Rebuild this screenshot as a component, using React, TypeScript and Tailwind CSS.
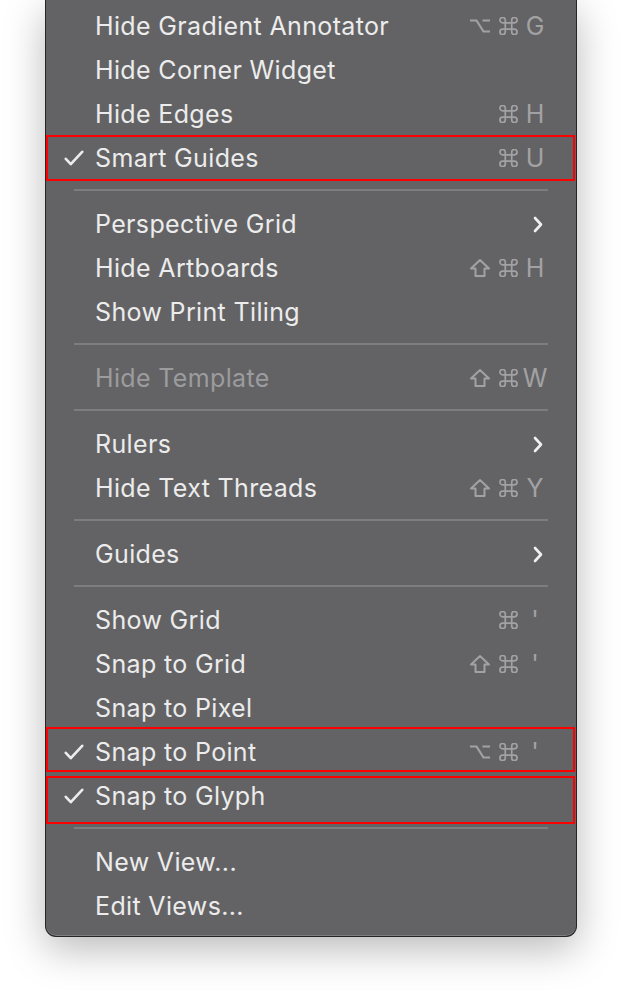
import React from "react";

type Mod = "cmd" | "opt" | "shift";

type Item = {
  label: string;
  checked?: boolean;
  disabled?: boolean;
  sub?: boolean;
  mods?: Mod[];
  keyChar?: string;
  box?: string;
};

type Entry = Item | "sep";

const items: Entry[] = [
  { label: "Hide Gradient Annotator", mods: ["opt", "cmd"], keyChar: "G" },
  { label: "Hide Corner Widget" },
  { label: "Hide Edges", mods: ["cmd"], keyChar: "H" },
  { label: "Smart Guides", checked: true, box: "-top-[1px] -bottom-[1px]", mods: ["cmd"], keyChar: "U" },
  "sep",
  { label: "Perspective Grid", sub: true },
  { label: "Hide Artboards", mods: ["shift", "cmd"], keyChar: "H" },
  { label: "Show Print Tiling" },
  "sep",
  { label: "Hide Template", disabled: true, mods: ["shift", "cmd"], keyChar: "W" },
  "sep",
  { label: "Rulers", sub: true },
  { label: "Hide Text Threads", mods: ["shift", "cmd"], keyChar: "Y" },
  "sep",
  { label: "Guides", sub: true },
  "sep",
  { label: "Show Grid", mods: ["cmd"], keyChar: "'" },
  { label: "Snap to Grid", mods: ["shift", "cmd"], keyChar: "'" },
  { label: "Snap to Pixel" },
  { label: "Snap to Point", checked: true, box: "-top-[3px] bottom-[2px]", mods: ["opt", "cmd"], keyChar: "'" },
  { label: "Snap to Glyph", checked: true, box: "top-[2px] -bottom-[6px]" },
  "sep",
  { label: "New View..." },
  { label: "Edit Views..." },
];

const ModIcon = ({ mod }: { mod: Mod }) => {
  if (mod === "cmd") {
    return (
      <svg width="19" height="18" viewBox="1.6 1.6 16.8 16.8" fill="none" stroke="currentColor" strokeWidth="1.6">
        <path d="M7 7H4.5A2.5 2.5 0 1 1 7 4.5V15.5A2.5 2.5 0 1 1 4.5 13H15.5A2.5 2.5 0 1 1 13 15.5V4.5A2.5 2.5 0 1 1 15.5 7Z" />
      </svg>
    );
  }
  if (mod === "opt") {
    return (
      <svg width="22" height="16" viewBox="0 0 22 16" fill="none" stroke="currentColor" strokeWidth="2.2">
        <path d="M1 2.5h6.5l7 11h6.5M13.5 2.5h7.5" />
      </svg>
    );
  }
  return (
    <svg width="22" height="20" viewBox="0 0 22 20" fill="none" stroke="currentColor" strokeWidth="2" strokeLinejoin="round">
      <path d="M11 2L20 10.5H15.5V18H6.5V10.5H2Z" />
    </svg>
  );
};

const Row = ({ item }: { item: Item }) => {
  const mods = item.mods ?? [];
  const slots: (Mod | null)[] = mods.length === 2 ? mods : [null, ...mods];
  return (
    <div className="relative flex h-[44px] items-center">
      {item.box && (
        <span className={`pointer-events-none absolute left-0 right-px border-2 border-[#ff0000] ${item.box}`} />
      )}
      <div className="flex w-[49px] shrink-0 justify-end pr-[11px] text-[#ececec]">
        {item.checked && (
          <svg width="20" height="16" viewBox="0 0 20 16" fill="none" stroke="currentColor" strokeWidth="2.6" strokeLinecap="round" strokeLinejoin="round">
            <path d="M1.8 8.8L6.8 14.2L18.2 1.8" />
          </svg>
        )}
      </div>
      <span className={`flex-1 tracking-[0.35px] ${item.disabled ? "text-[#9c9c9e]" : "text-[#ececec]"}`}>
        {item.label}
      </span>
      {item.sub && (
        <div className="flex w-[26px] justify-end pr-[5px] text-[#f0f0f0]">
          <svg width="10" height="17" viewBox="0 0 10 17" fill="none" stroke="currentColor" strokeWidth="2.6" strokeLinecap="round" strokeLinejoin="round">
            <path d="M2 2L8 8.5L2 15" />
          </svg>
        </div>
      )}
      {item.keyChar && (
        <div className="flex items-center text-[#a2a2a4]">
          {slots.map((m, i) => (
            <div key={i} className="flex w-[28px] justify-center">
              {m && <ModIcon mod={m} />}
            </div>
          ))}
          <div className="w-[26px] text-center">{item.keyChar}</div>
        </div>
      )}
      <div className="w-[28px] shrink-0" />
    </div>
  );
};

export default function App() {
  return (
    <div className="min-h-screen bg-white" style={{ fontFamily: "Inter, 'Noto Sans', sans-serif" }}>
      <div className="ml-[45px] w-[532px] rounded-b-[11px] border-x border-b border-[#262627] bg-[#636365] pt-[4px] pb-[8px] text-[25px] leading-none shadow-[inset_0_-1px_0_rgba(255,255,255,0.18),0_12px_40px_rgba(0,0,0,0.28)]">
        {items.map((e, i) =>
          e === "sep" ? (
            <div key={i} className="px-[28px] pt-[9px] pb-[11px]">
              <div className="h-[2px] bg-[#7d7d7f]" />
            </div>
          ) : (
            <Row key={i} item={e} />
          )
        )}
      </div>
    </div>
  );
}
